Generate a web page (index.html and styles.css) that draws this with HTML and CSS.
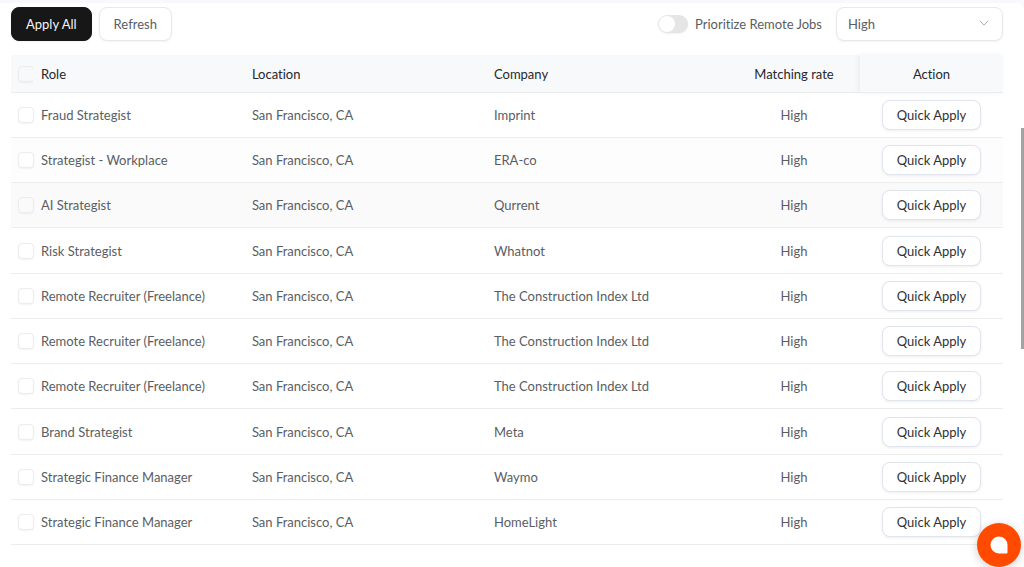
FILE: index.html
```
<!doctype html>
<html lang="en">
<head>
	<meta charset="UTF-8">
	<title>Jobs</title>
	<link rel="stylesheet" href="styles.css">
</head>
<body>
	<div class="panel">
		<div class="toolbar">
			<button type="button" class="btn btn-dark">Apply All</button>
			<button type="button" class="btn">Refresh</button>
			<div class="filters">
				<label class="switch-label">
					<input type="checkbox" class="switch" role="switch">
					<span>Prioritize Remote Jobs</span>
				</label>
				<div class="select-box">
					<select aria-label="Matching rate">
						<option selected>High</option>
						<option>Medium</option>
						<option>Low</option>
					</select>
					<svg class="chevron" viewBox="0 0 10 6" aria-hidden="true"><path d="M0.8 0.8L5 5L9.2 0.8"/></svg>
				</div>
			</div>
		</div>

		<table class="jobs">
			<colgroup>
				<col class="col-check">
				<col class="col-role">
				<col class="col-location">
				<col class="col-company">
				<col class="col-rate">
				<col class="col-action">
			</colgroup>
			<thead>
				<tr>
					<th class="check"><input type="checkbox" aria-label="Select all"></th>
					<th>Role</th>
					<th>Location</th>
					<th>Company</th>
					<th class="center">Matching rate</th>
					<th class="center fixed">Action</th>
				</tr>
			</thead>
			<tbody>
				<tr>
					<td class="check"><input type="checkbox" aria-label="Select job"></td>
					<td>Fraud Strategist</td>
					<td>San Francisco, CA</td>
					<td>Imprint</td>
					<td class="center">High</td>
					<td class="center"><button type="button" class="btn btn-small">Quick Apply</button></td>
				</tr>
				<tr class="visited">
					<td class="check"><input type="checkbox" aria-label="Select job"></td>
					<td>Strategist - Workplace</td>
					<td>San Francisco, CA</td>
					<td>ERA-co</td>
					<td class="center">High</td>
					<td class="center"><button type="button" class="btn btn-small">Quick Apply</button></td>
				</tr>
				<tr class="active">
					<td class="check"><input type="checkbox" aria-label="Select job"></td>
					<td>AI Strategist</td>
					<td>San Francisco, CA</td>
					<td>Qurrent</td>
					<td class="center">High</td>
					<td class="center"><button type="button" class="btn btn-small">Quick Apply</button></td>
				</tr>
				<tr>
					<td class="check"><input type="checkbox" aria-label="Select job"></td>
					<td>Risk Strategist</td>
					<td>San Francisco, CA</td>
					<td>Whatnot</td>
					<td class="center">High</td>
					<td class="center"><button type="button" class="btn btn-small">Quick Apply</button></td>
				</tr>
				<tr>
					<td class="check"><input type="checkbox" aria-label="Select job"></td>
					<td>Remote Recruiter (Freelance)</td>
					<td>San Francisco, CA</td>
					<td>The Construction Index Ltd</td>
					<td class="center">High</td>
					<td class="center"><button type="button" class="btn btn-small">Quick Apply</button></td>
				</tr>
				<tr>
					<td class="check"><input type="checkbox" aria-label="Select job"></td>
					<td>Remote Recruiter (Freelance)</td>
					<td>San Francisco, CA</td>
					<td>The Construction Index Ltd</td>
					<td class="center">High</td>
					<td class="center"><button type="button" class="btn btn-small">Quick Apply</button></td>
				</tr>
				<tr>
					<td class="check"><input type="checkbox" aria-label="Select job"></td>
					<td>Remote Recruiter (Freelance)</td>
					<td>San Francisco, CA</td>
					<td>The Construction Index Ltd</td>
					<td class="center">High</td>
					<td class="center"><button type="button" class="btn btn-small">Quick Apply</button></td>
				</tr>
				<tr>
					<td class="check"><input type="checkbox" aria-label="Select job"></td>
					<td>Brand Strategist</td>
					<td>San Francisco, CA</td>
					<td>Meta</td>
					<td class="center">High</td>
					<td class="center"><button type="button" class="btn btn-small">Quick Apply</button></td>
				</tr>
				<tr>
					<td class="check"><input type="checkbox" aria-label="Select job"></td>
					<td>Strategic Finance Manager</td>
					<td>San Francisco, CA</td>
					<td>Waymo</td>
					<td class="center">High</td>
					<td class="center"><button type="button" class="btn btn-small">Quick Apply</button></td>
				</tr>
				<tr>
					<td class="check"><input type="checkbox" aria-label="Select job"></td>
					<td>Strategic Finance Manager</td>
					<td>San Francisco, CA</td>
					<td>HomeLight</td>
					<td class="center">High</td>
					<td class="center"><button type="button" class="btn btn-small">Quick Apply</button></td>
				</tr>
			</tbody>
		</table>
	</div>

	<div class="scroll-thumb"></div>

	<button type="button" class="chat" aria-label="Open chat">
		<svg viewBox="0 0 18 18" aria-hidden="true"><path d="M9 0.5A8.5 8.5 0 0 0 9 17.5H16.5A1 1 0 0 0 17.5 16.5V9A8.5 8.5 0 0 0 9 0.5Z"/></svg>
	</button>
</body>
</html>
```
FILE: styles.css
```
*{
	box-sizing: border-box;
}

body{
	margin: 0;
	padding-top: 3px;
	background-color: #f8f9fc;
	color: #5a5e63;
	font: 13px/20px Lato, "Open Sans", sans-serif;
	font-variant-ligatures: none;
}

button, select{
	font: inherit;
	font-variant-ligatures: none;
	color: inherit;
}

.panel{
	min-height: calc(100vh - 3px);
	padding: 4px 21px 20px 11px;
	background-color: #fff;
	border-top-right-radius: 8px;
}

/* toolbar */
.toolbar{
	display: flex;
	align-items: center;
	gap: 7px;
	margin-bottom: 14px;
}

.btn{
	height: 34px;
	padding: 0 14px;
	background-color: #fff;
	border: 1px solid #e8e8e8;
	border-radius: 8px;
	box-shadow: 0 1px 2px rgba(0, 0, 0, 0.05);
	white-space: nowrap;
	cursor: pointer;
}

.btn-dark{
	background-color: #171717;
	border-color: #171717;
	color: #f5f5f5;
}

.btn-small{
	height: 30px;
	border-color: #e0e4ec;
	box-shadow: 0 1px 3px rgba(0, 0, 0, 0.07);
	color: #2f3135;
}

.filters{
	display: flex;
	align-items: center;
	gap: 14px;
	margin-left: auto;
}

.switch-label{
	display: flex;
	align-items: center;
	gap: 7px;
	cursor: pointer;
}

.switch{
	appearance: none;
	display: flex;
	align-items: center;
	width: 30px;
	height: 18px;
	margin: 0;
	padding: 1px;
	background-color: #e5e5e5;
	border-radius: 9px;
	box-shadow: 0 1px 2px rgba(0, 0, 0, 0.06);
}

.switch::before{
	content: "";
	width: 16px;
	height: 16px;
	background-color: #fff;
	border-radius: 50%;
}

.switch:checked{
	justify-content: flex-end;
	background-color: #171717;
}

.select-box{
	position: relative;
}

.select-box select{
	appearance: none;
	display: block;
	width: 167px;
	height: 34px;
	padding: 0 30px 0 11px;
	background-color: #fff;
	border: 1px solid #e8e8e8;
	border-radius: 8px;
	box-shadow: 0 1px 2px rgba(0, 0, 0, 0.05);
}

.chevron{
	position: absolute;
	top: 13px;
	right: 14px;
	width: 10px;
	height: 6px;
	fill: none;
	stroke: #b0b0b0;
	pointer-events: none;
}

/* table */
.jobs{
	width: 100%;
	table-layout: fixed;
	border-collapse: separate;
	border-spacing: 0;
}

.col-check{
	width: 22px;
}

.col-location, .col-company{
	width: 24.4%;
}

.col-rate{
	width: 132px;
}

.col-action{
	width: 143px;
}

.jobs th, .jobs td{
	height: 45px;
	padding: 0 8px;
	border-bottom: 1px solid #ededee;
	text-align: left;
}

.jobs tr:nth-child(4n) td{
	height: 46px;
}

.jobs th{
	height: 38px;
	background-color: #f8f9fb;
	color: #26282c;
	font-weight: 400;
}

.jobs .center{
	text-align: center;
}

.jobs .check{
	padding: 0 0 0 7px;
}

.jobs .fixed{
	box-shadow: -2px 0 5px rgba(0, 0, 0, 0.06);
}

.check input{
	appearance: none;
	display: block;
	width: 16px;
	height: 16px;
	margin: 0;
	background-color: #fff;
	border: 1px solid #ececec;
	border-radius: 4px;
	box-shadow: 0 1px 2px rgba(0, 0, 0, 0.05);
}

.check input:checked{
	background-color: #171717;
}

.jobs th input{
	background-color: transparent;
}

.visited{
	background-color: #fdfdfd;
}

.active{
	background-color: #fafafa;
}

.active .check input{
	background-color: transparent;
}

/* floating over the page */
.scroll-thumb{
	position: fixed;
	top: 128px;
	right: 0;
	width: 3px;
	height: 221px;
	background-color: #a3a3a3;
}

.chat{
	position: fixed;
	right: 3px;
	bottom: 0;
	display: flex;
	align-items: center;
	justify-content: center;
	width: 44px;
	height: 44px;
	padding: 0;
	background-color: #ff4a00;
	border: 0;
	border-radius: 50%;
	box-shadow: 0 2px 10px rgba(0, 0, 0, 0.2);
	cursor: pointer;
}

.chat svg{
	width: 18px;
	height: 18px;
	fill: #fff;
}
```
